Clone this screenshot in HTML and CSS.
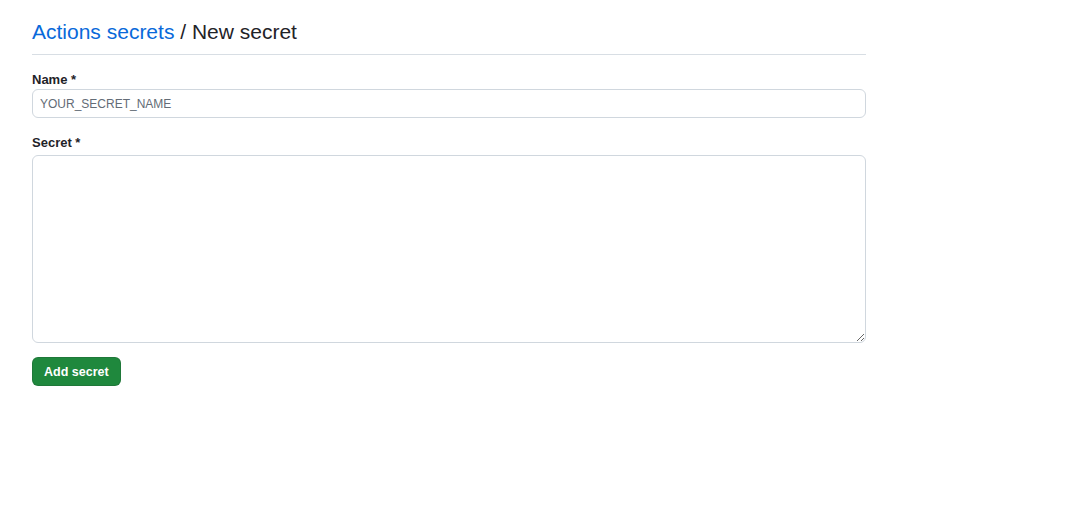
FILE: index.html
```html
<!DOCTYPE html>
<html lang="en">
<head>
<meta charset="utf-8">
<title>New secret</title>
<link rel="stylesheet" href="styles.css">
</head>
<body>
<main class="page">
  <div class="subhead">
    <h2 class="subhead-heading"><a class="crumb-link" href="#">Actions secrets</a> / New secret</h2>
  </div>
  <form class="secret-form">
    <label class="field-label label-name" for="name">Name *</label>
    <input class="form-input" id="name" type="text" placeholder="YOUR_SECRET_NAME">
    <label class="field-label label-secret" for="secret">Secret *</label>
    <textarea class="form-textarea" id="secret"></textarea>
    <div class="actions">
      <button class="btn-primary" type="button">Add secret</button>
    </div>
  </form>
</main>
</body>
</html>
```

FILE: styles.css
```css
* { box-sizing: border-box; }
html, body { margin: 0; padding: 0; background: #ffffff; }
body {
  font-family: "Liberation Sans", Arial, sans-serif;
  color: #1f2328;
}
.page {
  width: 866px;
  padding: 17px 0 0 32px;
}
.subhead {
  border-bottom: 1px solid #d8dee4;
  padding-bottom: 7px;
}
.subhead-heading {
  margin: 0;
  font-size: 21px;
  line-height: 30px;
  font-weight: 400;
  color: #1f2328;
}
.crumb-link {
  color: #0969da;
  text-decoration: none;
}
.secret-form {
  display: flex;
  flex-direction: column;
}
.field-label {
  display: block;
  font-size: 13px;
  font-weight: 700;
  line-height: 16px;
  color: #1f2328;
}
.label-name { margin: 17px 0 1px; }
.label-secret { margin: 17px 0 4px; }
.form-input {
  height: 29px;
  width: 100%;
  border: 1px solid #d0d7de;
  border-radius: 6px;
  padding: 0 7px;
  font-family: "Liberation Sans", Arial, sans-serif;
  font-size: 12px;
  color: #1f2328;
  background: #ffffff;
  outline: none;
}
.form-input::placeholder { color: #636c76; opacity: 1; }
.form-textarea {
  display: block;
  height: 188px;
  width: 100%;
  border: 1px solid #d0d7de;
  border-radius: 6px;
  padding: 8px;
  font-family: "Liberation Sans", Arial, sans-serif;
  font-size: 12px;
  background: #ffffff;
  outline: none;
  resize: vertical;
}
.actions {
  margin-top: 14px;
}
.btn-primary {
  height: 29px;
  padding: 2px 11px 0;
  border: 1px solid rgba(31, 35, 40, 0.15);
  border-radius: 6px;
  background: #1f883d;
  color: #ffffff;
  font-family: "Liberation Sans", Arial, sans-serif;
  font-size: 12.5px;
  font-weight: 700;
  line-height: 25px;
  cursor: pointer;
}
```
